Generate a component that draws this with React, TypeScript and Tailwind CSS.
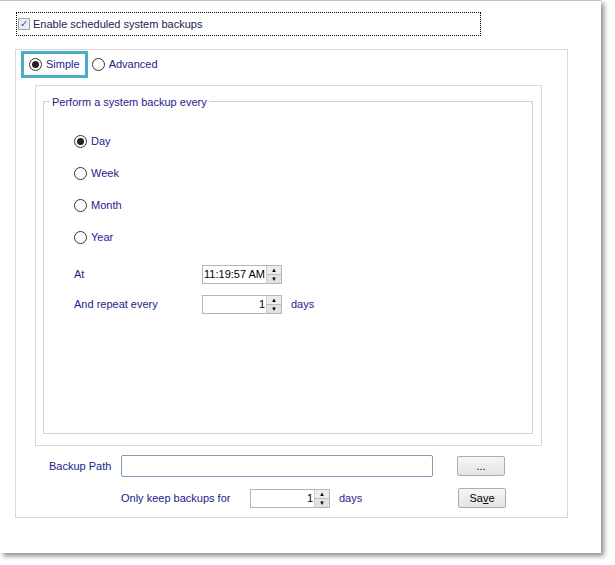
import React from "react";

const txt = "text-[#1c1c8a]";

function Radio({ checked, label }: { checked?: boolean; label: string }) {
  return (
    <div className="flex items-center gap-[4px] h-[16px]">
      <span className="w-[13px] h-[13px] rounded-full border border-[#333] bg-white flex items-center justify-center">
        {checked && <span className="w-[7px] h-[7px] rounded-full bg-[#222]" />}
      </span>
      <span className={txt}>{label}</span>
    </div>
  );
}

function Spin({ value }: { value: string }) {
  return (
    <div className="flex h-[19px] w-[80px] border border-[#b5b5b5] bg-white">
      <div className="flex-1 text-right pr-[1px] leading-[17px] text-black overflow-hidden whitespace-nowrap">{value}</div>
      <div className="w-[15px] flex flex-col border-l border-[#ccc]">
        <div className="flex-1 bg-[#ececec] border-b border-[#bbb] flex items-center justify-center text-[6px] leading-none">▲</div>
        <div className="flex-1 bg-[#e2e2e2] flex items-center justify-center text-[6px] leading-none">▼</div>
      </div>
    </div>
  );
}

function Btn({ children }: { children: React.ReactNode }) {
  return (
    <div className="w-[48px] h-[20px] border border-[#acacac] rounded-[2px] bg-gradient-to-b from-[#f6f6f6] to-[#e3e3e3] flex items-center justify-center text-black">
      {children}
    </div>
  );
}

export default function App() {
  return (
    <div className="w-[615px] h-[565px] bg-white relative text-[11px]" style={{ fontFamily: "'Liberation Sans', Arial, sans-serif" }}>
      <div className="w-[601px] h-[553px] bg-white border-t border-[#b8c4d0] shadow-[3px_3px_5px_rgba(0,0,0,0.45)] pt-[11px]">
        <div className="ml-[16px] w-[465px] h-[24px] border border-dotted border-black flex items-center pl-[1px] gap-[3px]">
          <span className="w-[12px] h-[12px] border border-[#9aa] bg-[#e8eef4] flex items-center justify-center text-[10px] text-[#2a5ca8] leading-none">✓</span>
          <span className="text-[#222255]">Enable scheduled system backups</span>
        </div>
        <div className="ml-[15px] mt-[13px] w-[553px] h-[469px] border border-[#d8d8d8] pt-[1px]">
          <div className="flex items-center h-[27px] ml-[5px]">
            <div className="border-[3px] border-[#4bacc6] h-[27px] px-[5px] flex items-center">
              <Radio checked label="Simple" />
            </div>
            <div className="ml-[4px]"><Radio label="Advanced" /></div>
          </div>
          <div className="ml-[19px] mt-[7px] w-[507px] h-[361px] border border-[#d8d8d8] pt-[15px] pl-[7px]">
            <div className="relative w-[490px] h-[333px] border border-[#d0d0d0]">
              <span className={`absolute -top-[8px] left-[6px] bg-white px-[2px] ${txt}`}>Perform a system backup every</span>
              <div className="ml-[30px] mt-[31px] flex flex-col gap-[16px]">
                <Radio checked label="Day" />
                <Radio label="Week" />
                <Radio label="Month" />
                <Radio label="Year" />
              </div>
              <div className="ml-[30px] mt-[20px] flex items-center">
                <span className={`w-[128px] ${txt}`}>At</span>
                <Spin value="11:19:57 AM" />
              </div>
              <div className="ml-[30px] mt-[11px] flex items-center">
                <span className={`w-[128px] ${txt}`}>And repeat every</span>
                <Spin value="1" />
                <span className={`ml-[9px] ${txt}`}>days</span>
              </div>
            </div>
          </div>
          <div className="mt-[9px] flex items-center">
            <span className={`ml-[33px] w-[72px] ${txt}`}>Backup Path</span>
            <div className="w-[312px] h-[22px] border border-[#7f9db9] rounded-[2px] bg-white" />
            <div className="ml-[24px]"><Btn>...</Btn></div>
          </div>
          <div className="mt-[11px] flex items-center">
            <span className={`ml-[105px] w-[129px] ${txt}`}>Only keep backups for</span>
            <Spin value="1" />
            <span className={`ml-[9px] w-[119px] ${txt}`}>days</span>
            <Btn><span>Sa<u>v</u>e</span></Btn>
          </div>
        </div>
      </div>
    </div>
  );
}
